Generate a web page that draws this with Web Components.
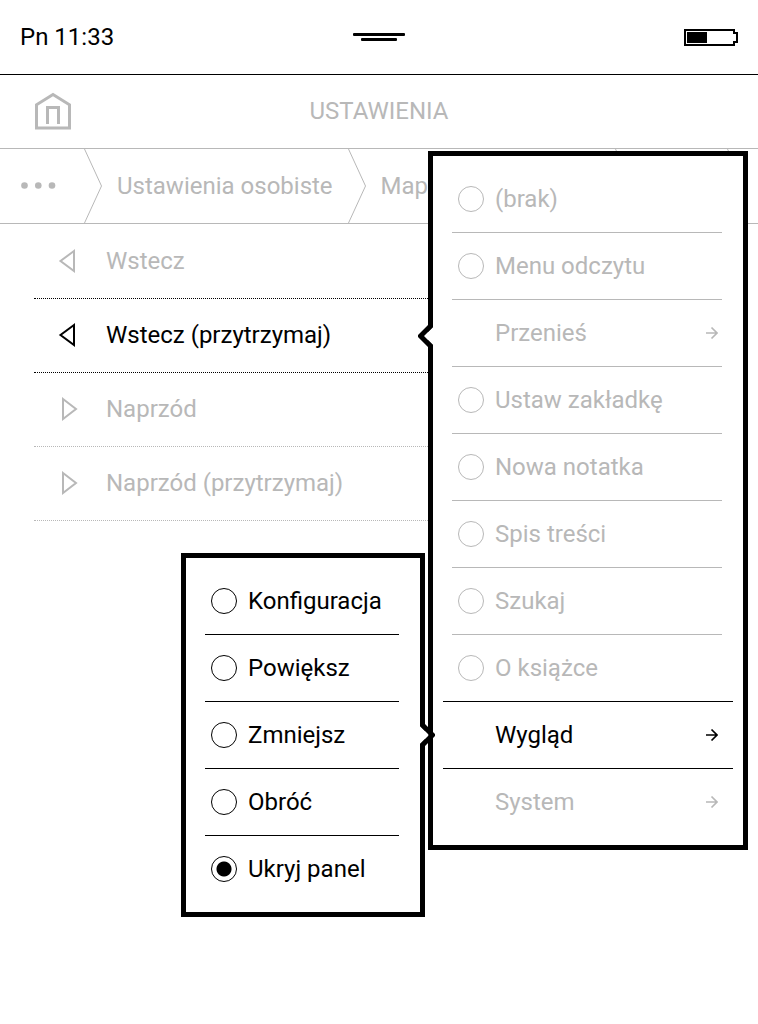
<!DOCTYPE html>
<html lang="pl">
<head>
<meta charset="utf-8">
<meta name="viewport" content="width=device-width, initial-scale=1">
<title>Ustawienia</title>
<style>
    body {
        margin: 0;
        background: #fff;
        color: #000;
        font-family: Roboto, "Noto Sans", sans-serif;
        font-size: 24px;
        line-height: 32px;
        --muted: #b8b8b8;
    }
</style>
</head>
<body>
<reader-screen>
    <status-bar slot="status">Pn 11:33</status-bar>
    <title-bar slot="title">USTAWIENIA</title-bar>
    <crumb-bar slot="crumbs">
        <crumb-item><crumb-dots></crumb-dots></crumb-item>
        <crumb-item>Ustawienia osobiste</crumb-item>
        <crumb-item class="wide">Map</crumb-item>
        <crumb-item class="short"></crumb-item>
    </crumb-bar>
    <key-row>Wstecz</key-row>
    <key-row active>Wstecz (przytrzymaj)</key-row>
    <key-row forward>Naprzód</key-row>
    <key-row forward>Naprzód (przytrzymaj)</key-row>

    <popup-menu slot="popup" class="actions" pointer="left" muted>
        <menu-option>(brak)</menu-option>
        <menu-option>Menu odczytu</menu-option>
        <menu-option submenu>Przenieś</menu-option>
        <menu-option>Ustaw zakładkę</menu-option>
        <menu-option>Nowa notatka</menu-option>
        <menu-option>Spis treści</menu-option>
        <menu-option>Szukaj</menu-option>
        <menu-option plain>O książce</menu-option>
        <menu-option submenu active>Wygląd</menu-option>
        <menu-option submenu plain>System</menu-option>
    </popup-menu>

    <popup-menu slot="popup" class="view" pointer="right">
        <menu-option>Konfiguracja</menu-option>
        <menu-option>Powiększ</menu-option>
        <menu-option>Zmniejsz</menu-option>
        <menu-option>Obróć</menu-option>
        <menu-option checked plain>Ukryj panel</menu-option>
    </popup-menu>
</reader-screen>

<script>
class ReaderScreen extends HTMLElement {
    constructor() {
        super();
        this.attachShadow({ mode: 'open' }).innerHTML = `
        <style>
        :host {
            display: block;
            position: relative;
            min-height: 100vh;
            overflow: hidden;
        }

        main {
            padding: 1px 34px 0;
        }

        ::slotted(popup-menu) {
            position: absolute;
        }

        ::slotted(.actions) {
            top: 151px;
            right: 10px;
            width: 320px;
        }

        ::slotted(.view) {
            top: 553px;
            right: 333px;
            width: 244px;
        }
        </style>
        <slot name="status"></slot>
        <slot name="title"></slot>
        <slot name="crumbs"></slot>
        <main><slot></slot></main>
        <slot name="popup"></slot>
        `;
    }
}

class StatusBar extends HTMLElement {
    constructor() {
        super();
        this.attachShadow({ mode: 'open' }).innerHTML = `
        <style>
        :host {
            display: grid;
            grid-template-columns: 1fr auto 1fr;
            align-items: center;
            height: 74px;
            padding: 0 20px;
            border-bottom: 1px solid #000;
        }

        svg {
            display: block;
        }

        .battery {
            justify-self: end;
        }
        </style>
        <span><slot></slot></span>
        <svg width="52" height="8" viewBox="0 0 52 8">
            <rect width="52" height="3" rx="1"/>
            <rect x="8" y="5" width="36" height="3" rx="1"/>
        </svg>
        <svg class="battery" width="54" height="18" viewBox="0 0 54 18">
            <path d="M1 2H50V5H53V14H50V17H1Z" fill="none" stroke="#000" stroke-width="2"/>
            <rect x="3" y="4" width="20" height="11"/>
        </svg>
        `;
    }
}

class TitleBar extends HTMLElement {
    constructor() {
        super();
        this.attachShadow({ mode: 'open' }).innerHTML = `
        <style>
        :host {
            display: grid;
            grid-template-columns: 1fr auto 1fr;
            align-items: center;
            box-sizing: border-box;
            height: 74px;
            padding: 0 35px 2px;
            border-bottom: 1px solid var(--muted);
            color: var(--muted);
        }

        a {
            color: inherit;
            justify-self: start;
        }

        h1 {
            margin: 0;
            font-size: 24px;
            font-weight: 400;
        }

        svg {
            display: block;
        }
        </style>
        <a href="#" aria-label="Start">
            <svg width="36" height="38" viewBox="0 0 36 38" fill="none" stroke="currentColor" stroke-width="3">
                <path d="M1.5 12.8V36H34.5V12.8L18 2.5Z"/>
                <path d="M12.5 32V15.5H23.5V32"/>
            </svg>
        </a>
        <h1><slot></slot></h1>
        `;
    }
}

class CrumbBar extends HTMLElement {
    constructor() {
        super();
        this.attachShadow({ mode: 'open' }).innerHTML = `
        <style>
        :host {
            display: block;
            border-bottom: 1px solid var(--muted);
            color: var(--muted);
        }

        nav {
            display: flex;
            height: 74px;
            overflow: hidden;
        }
        </style>
        <nav><slot></slot></nav>
        `;
    }
}

class CrumbItem extends HTMLElement {
    constructor() {
        super();
        this.attachShadow({ mode: 'open' }).innerHTML = `
        <style>
        :host {
            display: flex;
            flex: none;
        }

        :host(.wide) {
            width: 267px;
        }

        :host(.short) {
            width: 112px;
        }

        a {
            flex: 1;
            display: flex;
            align-items: center;
            padding-left: 15px;
            padding-right: 15px;
            color: inherit;
            text-decoration: none;
        }

        :host(:first-child) a {
            padding-left: 21px;
            padding-right: 28px;
        }

        svg {
            display: block;
            flex: none;
        }
        </style>
        <a href="#"><slot></slot></a>
        <svg width="18" height="74" viewBox="0 0 18 74" fill="none" stroke="currentColor">
            <path d="M0.5 0L17.5 37L0.5 74"/>
        </svg>
        `;
    }
}

class CrumbDots extends HTMLElement {
    constructor() {
        super();
        this.attachShadow({ mode: 'open' }).innerHTML = `
        <style>
        :host {
            display: block;
        }

        svg {
            display: block;
        }
        </style>
        <svg width="35" height="8" viewBox="0 0 35 8" fill="currentColor">
            <circle cx="3.5" cy="3.5" r="3.3"/>
            <circle cx="17.3" cy="3.5" r="3.3"/>
            <circle cx="31" cy="3.5" r="3.3"/>
        </svg>
        `;
    }
}

class KeyRow extends HTMLElement {
    connectedCallback() {
        const shape = this.hasAttribute('forward')
            ? 'M5 2L18 12L5 22Z'
            : 'M16 2L2.5 12L16 22Z';
        this.attachShadow({ mode: 'open' }).innerHTML = `
        <style>
        :host {
            display: block;
            color: var(--muted);
            border-bottom: 1px dotted var(--muted);
        }

        :host([active]) {
            color: #000;
        }

        :host([active]),
        :host(:first-of-type) {
            border-bottom-color: #000;
        }

        button {
            display: flex;
            align-items: center;
            gap: 28px;
            width: 100%;
            height: 73px;
            padding: 0 24px 2px;
            border: 0;
            background: none;
            color: inherit;
            font: inherit;
            text-align: left;
        }
        </style>
        <button type="button">
            <svg width="20" height="24" viewBox="0 0 20 24" fill="none" stroke="currentColor" stroke-width="2">
                <path d="${shape}"/>
            </svg>
            <span><slot></slot></span>
        </button>
        `;
    }
}

class PopupMenu extends HTMLElement {
    constructor() {
        super();
        this.attachShadow({ mode: 'open' }).innerHTML = `
        <style>
        :host {
            display: block;
            box-sizing: border-box;
            padding: 10px;
            border: 5px solid #000;
            background: #fff;
        }

        :host([muted]) {
            color: var(--muted);
        }

        svg {
            position: absolute;
            display: block;
        }

        :host([pointer="left"]) svg {
            top: 168px;
            left: -15px;
        }

        :host([pointer="right"]) svg {
            top: 165px;
            right: -15px;
            transform: scaleX(-1);
        }
        </style>
        <slot></slot>
        <svg width="15" height="24" viewBox="0 0 15 24">
            <path d="M15 3L6 12L15 21Z" fill="#fff"/>
            <path d="M10 1L0 11V13L10 23H15V21L6 12L15 3V1Z"/>
        </svg>
        `;
    }
}

class MenuOption extends HTMLElement {
    connectedCallback() {
        const checked = this.hasAttribute('checked') ? 'checked' : '';
        const row = this.hasAttribute('submenu')
            ? `<button type="button" class="row">
                <span class="text"><slot></slot></span>
                <svg width="12" height="14" viewBox="0 0 12 14" fill="none" stroke="currentColor" stroke-width="1.7">
                    <path d="M0 7H11M5.5 1.5L11 7L5.5 12.5"/>
                </svg>
            </button>`
            : `<label class="row">
                <input type="radio" ${checked}>
                <span class="text"><slot></slot></span>
            </label>`;
        this.attachShadow({ mode: 'open' }).innerHTML = `
        <style>
        :host {
            display: block;
            margin: 0 11px 0 9px;
            border-bottom: 1px solid;
        }

        :host([plain]) {
            border-bottom: 0;
        }

        /* the open entry gets wider rules on both sides */
        :host([active]) {
            margin: 0;
            padding: 0 11px 0 9px;
            border-top: 1px solid;
            color: #000;
        }

        .row {
            box-sizing: border-box;
            display: flex;
            align-items: center;
            width: 100%;
            height: 66px;
            padding: 0 4px 0 6px;
            border: 0;
            background: none;
            color: inherit;
            font: inherit;
            text-align: left;
        }

        button .text {
            flex: 1;
            padding-left: 37px;
        }

        input {
            appearance: none;
            box-sizing: border-box;
            flex: none;
            width: 26px;
            height: 26px;
            margin: 0 11px 0 0;
            border: 1px solid;
            border-radius: 50%;
            color: inherit;
        }

        input:checked {
            background: radial-gradient(circle, #000 7px, transparent 8px);
        }
        </style>
        ${row}
        `;
    }
}

customElements.define('reader-screen', ReaderScreen);
customElements.define('status-bar', StatusBar);
customElements.define('title-bar', TitleBar);
customElements.define('crumb-bar', CrumbBar);
customElements.define('crumb-item', CrumbItem);
customElements.define('crumb-dots', CrumbDots);
customElements.define('key-row', KeyRow);
customElements.define('popup-menu', PopupMenu);
customElements.define('menu-option', MenuOption);
</script>
</body>
</html>
